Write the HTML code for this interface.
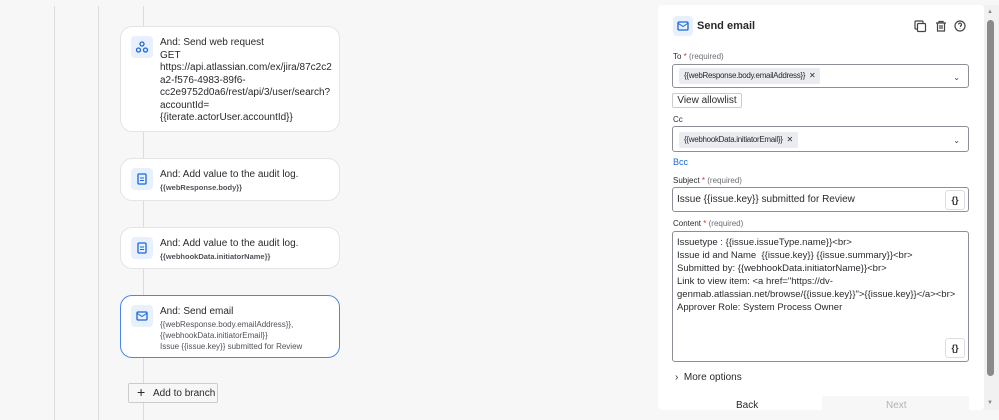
<!DOCTYPE html>
<html><head><style>
*{box-sizing:border-box;margin:0;padding:0}
body{width:999px;height:420px;overflow:hidden;background:#f7f7f7;font-family:"Liberation Sans",sans-serif;color:#172b4d;position:relative}
.a{position:absolute}
.vl{position:absolute;width:1px;background:#dcdcdc;top:6px;bottom:0}
.card{position:absolute;left:120px;width:220px;background:#fff;border:1px solid #e4e4e4;border-radius:12px}
.ic{position:absolute;left:10px;top:9px;width:22px;height:22px;background:#e9f0fd;border-radius:4px}
.t{position:absolute;left:39px;font-size:10px;color:#292a2e;line-height:12.5px}
.s{font-size:8px;color:#505258;line-height:11px}
.lbl{position:absolute;left:673px;font-size:8px;color:#292a2e}
.lbl i{font-style:normal;color:#c9372c}.lbl em{font-style:normal;color:#6b6e76}
.fld{position:absolute;left:672px;width:297px;border:1px solid #8c8f97;border-radius:3px;background:#fff;color:#292a2e}
.chip{position:absolute;left:6px;top:5px;height:16px;background:#ebecf0;border-radius:2px;font-size:8px;line-height:16px;padding:0 5px;color:#292a2e;letter-spacing:-0.3px}
.chv{position:absolute;right:8px;top:8px;font-size:8px;color:#444}
.br{position:absolute;right:3px;width:20px;height:20px;border:1px solid #ddd;border-radius:3px;font-size:9px;font-weight:bold;text-align:center;line-height:18px;background:#fff}
</style></head><body>
<div class="vl" style="left:54px"></div>
<div class="vl" style="left:98px"></div>
<div class="vl" style="left:143px"></div>

<div class="card" style="top:26px;height:106px"><div class="ic"><svg width="22" height="22" viewBox="0 0 22 22"><g fill="none" stroke="#1868db" stroke-width="1.3"><circle cx="11" cy="8" r="2"/><circle cx="7.5" cy="14" r="2"/><circle cx="14.5" cy="14" r="2"/></g></svg></div>
<div class="t" style="top:10px">And: Send web request<br>GET<br>https://api.atlassian.com/ex/jira/87c2c2<br>a2-f576-4983-89f6-<br>cc2e9752d0a6/rest/api/3/user/search?<br>accountId=<br>{{iterate.actorUser.accountId}}</div></div>

<div class="card" style="top:158px;height:43px"><div class="ic"><svg width="22" height="22"><rect x="7" y="6" width="8" height="10" rx="1" fill="none" stroke="#1868db" stroke-width="1.3"/><path d="M9 10h4M9 12.5h4" stroke="#1868db"/></svg></div>
<div class="t" style="top:10px">And: Add value to the audit log.<div class="s" style="font-weight:bold;font-size:7.5px">{{webResponse.body}}</div></div></div>

<div class="card" style="top:227px;height:42px"><div class="ic"><svg width="22" height="22"><rect x="7" y="6" width="8" height="10" rx="1" fill="none" stroke="#1868db" stroke-width="1.3"/><path d="M9 10h4M9 12.5h4" stroke="#1868db"/></svg></div>
<div class="t" style="top:10px">And: Add value to the audit log.<div class="s" style="font-weight:bold;font-size:7.5px">{{webhookData.initiatorName}}</div></div></div>

<div class="card" style="top:295px;height:63px;border:1.5px solid #4a87e8"><div class="ic"><svg width="22" height="22"><rect x="6" y="7" width="10" height="8" rx="1" fill="none" stroke="#1868db" stroke-width="1.3"/><path d="M6.5 8.5l4.5 3 4.5-3" fill="none" stroke="#1868db"/></svg></div>
<div class="t" style="top:10px">And: Send email<div class="s">{{webResponse.body.emailAddress}},<br>{{webhookData.initiatorEmail}}<br>Issue {{issue.key}} submitted for Review</div></div></div>

<div class="a" style="left:128px;top:383px;width:90px;height:20px;border:1px solid #ccc;background:#f7f7f7;border-radius:2px;font-size:10px;line-height:19px;padding-left:24px;color:#292a2e">Add to branch<span class="a" style="left:8px;top:-1px;font-size:14px">+</span></div>

<div class="a" style="left:658px;top:5px;width:326px;height:405px;background:#fff;border-radius:4px"></div>
<div class="a" style="left:673px;top:16px;width:20px;height:20px;background:#e9f0fd;border-radius:4px"><svg width="20" height="20"><rect x="5" y="6" width="10" height="8" rx="1" fill="none" stroke="#1868db" stroke-width="1.3"/><path d="M5.5 7.5l4.5 3 4.5-3" fill="none" stroke="#1868db"/></svg></div>
<div class="a" style="left:697px;top:20px;font-size:11px;font-weight:bold;color:#292a2e">Send email</div>
<svg class="a" style="left:910px;top:18px" width="60" height="16"><g fill="none" stroke="#444" stroke-width="1.2"><rect x="5" y="3" width="8" height="8" rx="1"/><rect x="7.5" y="5.5" width="8" height="8" rx="1" fill="#fff"/><path d="M26 5h10M29 5V3.5h4V5M27.5 5v8h7V5M30 7v4M32 7v4"/><circle cx="50" cy="8" r="5"/><path d="M48.5 6.5a1.5 1.5 0 1 1 2 1.5v1M50 10.5v.5"/></g></svg>

<div class="lbl" style="top:52px">To <i>*</i> <em>(required)</em></div>
<div class="fld" style="top:64px;height:24px"><div class="chip" style="top:3px">{{webResponse.body.emailAddress}} &nbsp;✕</div><span class="chv">⌄</span></div>
<div class="a" style="left:672px;top:93px;width:70px;height:15px;border:1px solid #ccc;border-radius:2px;font-size:10px;line-height:13px;text-align:center;color:#292a2e">View allowlist</div>
<div class="lbl" style="top:115px">Cc</div>
<div class="fld" style="top:126px;height:26px"><div class="chip">{{webhookData.initiatorEmail}} &nbsp;✕</div><span class="chv" style="top:9px">⌄</span></div>
<div class="a" style="left:673px;top:157px;font-size:9px;color:#1868db">Bcc</div>
<div class="lbl" style="top:176px">Subject <i>*</i> <em>(required)</em></div>
<div class="fld" style="top:187px;height:25px;font-size:10px;line-height:23px;padding-left:4px">Issue {{issue.key}} submitted for Review<div class="br" style="top:2px">{}</div></div>
<div class="lbl" style="top:219px">Content <i>*</i> <em>(required)</em></div>
<div class="fld" style="top:231px;height:131px;font-size:9.5px;line-height:13px;padding:4px 4px">Issuetype : {{issue.issueType.name}}&lt;br&gt;<br>Issue id and Name&nbsp; {{issue.key}} {{issue.summary}}&lt;br&gt;<br>Submitted by: {{webhookData.initiatorName}}&lt;br&gt;<br>Link to view item: &lt;a href="https://dv-<br>genmab.atlassian.net/browse/{{issue.key}}"&gt;{{issue.key}}&lt;/a&gt;&lt;br&gt;<br>Approver Role: System Process Owner<div class="br" style="bottom:3px">{}</div></div>
<div class="a" style="left:675px;top:372px;font-size:10px;color:#292a2e">›&nbsp; More options</div>
<div class="a" style="left:822px;top:396px;width:147px;height:14px;background:#f7f7f7"></div>
<div class="a" style="left:736px;top:400px;font-size:10px;color:#292a2e">Back</div>
<div class="a" style="left:886px;top:400px;font-size:10px;color:#b0b2b8">Next</div>

<div class="a" style="left:984px;top:5px;width:15px;height:405px;background:#f1f1f1"></div>
<div class="a" style="left:987px;top:20px;width:7px;height:356px;background:#8a8a8a;border-radius:4px"></div>
<div class="a" style="left:987px;top:9px;font-size:6px;color:#888">▲</div>
<div class="a" style="left:987px;top:400px;font-size:6px;color:#888">▼</div>
</body></html>
